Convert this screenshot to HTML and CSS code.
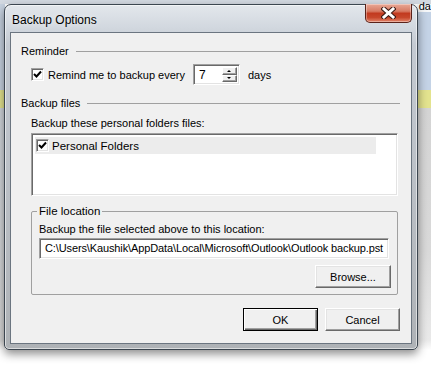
FILE: index.html
```html
<!DOCTYPE html>
<html lang="en">

<head>
    <meta charset="UTF-8">
    <meta name="viewport" content="width=device-width, initial-scale=1.0">
    <title>Backup Options</title>
    <link rel="stylesheet" href="styles.css">
</head>

<body>
    <div class="desktop">
        <!-- text of the app window behind the dialog -->
        <span class="behind-text">da</span>

        <div class="window">
            <div class="titlebar">
                <span class="title">Backup Options</span>
                <button class="close-btn" aria-label="Close">
                    <svg width="15" height="12" viewBox="0 0 15 12">
                        <path d="M3 2 L12 10 M12 2 L3 10" stroke="#3b1a14" stroke-width="5" stroke-linecap="square" />
                        <path d="M3 2 L12 10 M12 2 L3 10" stroke="#ffffff" stroke-width="3" stroke-linecap="square" />
                    </svg>
                </button>
            </div>

            <div class="client">
                <!-- Reminder -->
                <div class="heading">
                    <span>Reminder</span>
                    <span class="rule"></span>
                </div>
                <div class="remind-row">
                    <span class="check">
                        <svg width="9" height="9" viewBox="0 0 9 9">
                            <polyline points="1,4 3.5,6.5 8,1.5" fill="none" stroke="#000" stroke-width="2" />
                        </svg>
                    </span>
                    <span class="remind-label">Remind me to backup every</span>
                    <div class="spinner field">
                        <span class="spin-value">7</span>
                        <div class="spin-btns">
                            <span class="spin-btn"><i class="arrow-up"></i></span>
                            <span class="spin-btn"><i class="arrow-down"></i></span>
                        </div>
                    </div>
                    <span class="days">days</span>
                </div>

                <!-- Backup files -->
                <div class="heading second">
                    <span>Backup files</span>
                    <span class="rule"></span>
                </div>
                <div class="indent-label">Backup these personal folders files:</div>
                <div class="listbox field">
                    <div class="list-item">
                        <span class="check">
                            <svg width="9" height="9" viewBox="0 0 9 9">
                                <polyline points="1,4 3.5,6.5 8,1.5" fill="none" stroke="#000" stroke-width="2" />
                            </svg>
                        </span>
                        <span>Personal Folders</span>
                    </div>
                </div>

                <fieldset class="group">
                    <legend>File location</legend>
                    <div class="group-label">Backup the file selected above to this location:</div>
                    <div class="textbox field">C:\Users\Kaushik\AppData\Local\Microsoft\Outlook\Outlook backup.pst</div>
                    <div class="browse-row">
                        <button class="btn">Browse...</button>
                    </div>
                </fieldset>

                <div class="dialog-buttons">
                    <button class="btn default">OK</button>
                    <button class="btn">Cancel</button>
                </div>
            </div>
        </div>
    </div>
</body>

</html>
```

FILE: styles.css
```css
html,
body {
    margin: 0;
    height: 100%;
    overflow: hidden;
    font-family: "Liberation Sans", Arial, sans-serif;
    font-size: 11px;
    color: #000;
}

/* the screen behind the dialog */
.desktop {
    position: relative;
    width: 431px;
    height: 365px;
    background:
        linear-gradient(180deg, #d3d9e1 0, #d3d9e1 4px, transparent 4px),
        linear-gradient(180deg, #f5f7f9 0, #f5f7f9 12px, #c4d3e6 12px, #c4d3e6 90px, #e3e38e 90px, #e3e38e 108px, #d4d4d4 108px, #d9d9d9 250px, #e9e9e9 340px, #ffffff 350px) right top / 14px 100% no-repeat,
        linear-gradient(180deg, #c6d1df 0, #c6d1df 90px, #e3e38e 90px, #e3e38e 108px, #cfd4da 108px, #d6d6d6 340px, #ffffff 350px) left top / 5px 100% no-repeat,
        #ffffff;
}

.behind-text {
    position: absolute;
    right: 0;
    top: 0;
    font-size: 11px;
    line-height: 12px;
}

.window {
    position: absolute;
    left: 4px;
    top: 4px;
    width: 414px;
    height: 346px;
    box-sizing: border-box;
    border: 1px solid #3c4650;
    border-radius: 7px 7px 5px 5px;
    background: linear-gradient(180deg, #e3e7ec 0, #d2d8df 22px, #c4cad2 40px, #b9bec4 200px, #aeb2b6 100%);
    box-shadow: 0 4px 10px rgba(0, 0, 0, 0.45), inset 0 0 0 1px rgba(255, 255, 255, 0.55);
    display: flex;
    flex-direction: column;
}

.titlebar {
    height: 27px;
    display: flex;
    justify-content: space-between;
    align-items: flex-start;
    flex-shrink: 0;
}

.title {
    font-size: 12px;
    line-height: 14px;
    margin: 8px 0 0 7px;
    color: #000;
    text-shadow: 0 0 6px rgba(255, 255, 255, 0.9);
}

.close-btn {
    width: 47px;
    height: 19px;
    margin: -1px 5px 0 0;
    padding: 0;
    border: 1px solid #5a2219;
    border-top: none;
    border-radius: 0 0 5px 5px;
    background: linear-gradient(180deg, #e9a896 0, #d77b64 40%, #c23a1f 52%, #c7472b 75%, #e3876c 100%);
    box-shadow: inset 0 0 0 1px rgba(255, 255, 255, 0.35);
    display: flex;
    align-items: center;
    justify-content: center;
}

.client {
    flex: 1;
    margin: 0 5px 5px 5px;
    border: 1px solid #6b7580;
    background-color: #f0f0f0;
    padding: 11px 11px 0 10px;
}

.heading {
    display: flex;
    align-items: center;
    gap: 7px;
    height: 14px;
    line-height: 14px;
}

.heading.second {
    margin-top: 11px;
}

.rule {
    flex: 1;
    height: 1px;
    background-color: #a0a0a0;
}

/* sunken 3d look used by text fields */
.field {
    box-sizing: border-box;
    background-color: #fff;
    border: 1px solid;
    border-color: #a0a0a0 #ffffff #ffffff #a0a0a0;
    box-shadow: inset 1px 1px 0 #696969, inset -1px -1px 0 #e3e3e3;
}

.check {
    box-sizing: border-box;
    width: 13px;
    height: 13px;
    background-color: #fff;
    border: 1px solid;
    border-color: #a0a0a0 #ffffff #ffffff #a0a0a0;
    box-shadow: inset 1px 1px 0 #696969, inset -1px -1px 0 #e3e3e3;
    display: flex;
    align-items: center;
    justify-content: center;
    flex-shrink: 0;
}

.remind-row {
    display: flex;
    align-items: center;
    height: 21px;
    margin: 6px 0 0 10px;
}

.remind-label {
    margin-left: 4px;
}

.spinner {
    width: 47px;
    height: 21px;
    margin-left: 8px;
    display: flex;
    padding: 2px;
}

.spin-value {
    flex: 1;
    padding-left: 3px;
    line-height: 16px;
    font-size: 12px;
}

.spin-btns {
    width: 15px;
    display: flex;
    flex-direction: column;
}

.spin-btn {
    flex: 1;
    box-sizing: border-box;
    background-color: #f0f0f0;
    border: 1px solid;
    border-color: #ffffff #696969 #696969 #ffffff;
    box-shadow: inset -1px -1px 0 #a0a0a0;
    display: flex;
    align-items: center;
    justify-content: center;
}

.arrow-up {
    border-left: 2px solid transparent;
    border-right: 2px solid transparent;
    border-bottom: 2px solid #000;
}

.arrow-down {
    border-left: 2px solid transparent;
    border-right: 2px solid transparent;
    border-top: 2px solid #000;
}

.days {
    margin-left: 8px;
}

.indent-label {
    margin: 6px 0 0 10px;
    line-height: 14px;
}

.listbox {
    width: 367px;
    height: 63px;
    margin: 3px 0 0 10px;
    padding: 3px 21px 0 3px;
}

.list-item {
    height: 17px;
    background-color: #ececec;
    display: flex;
    align-items: center;
    gap: 3px;
    padding-left: 1px;
    font-size: 11.5px;
}

.group {
    width: 367px;
    box-sizing: border-box;
    margin: 8px 0 0 10px;
    padding: 0 6px 6px 7px;
    border: 1px solid #a0a0a0;
    border-radius: 2px;
    min-width: 0;
}

.group legend {
    padding: 0 2px;
    margin-left: -2px;
    line-height: 14px;
    font-size: 11.5px;
}

.group-label {
    margin-top: 4px;
    line-height: 14px;
}

.textbox {
    width: 350px;
    height: 21px;
    margin-top: 2px;
    padding-left: 5px;
    line-height: 19px;
    letter-spacing: -0.12px;
    white-space: nowrap;
    overflow: hidden;
}

.browse-row {
    display: flex;
    justify-content: flex-end;
    margin-top: 6px;
}

/* raised classic buttons */
.btn {
    width: 75px;
    height: 23px;
    padding: 0;
    font-family: inherit;
    font-size: 11px;
    color: #000;
    background-color: #f0f0f0;
    border: 1px solid;
    border-color: #ffffff #696969 #696969 #ffffff;
    box-shadow: inset -1px -1px 0 #a0a0a0, inset 1px 1px 0 #e3e3e3;
}

.browse-row .btn {
    width: 76px;
}

.btn.default {
    border: 1px solid #000;
    box-shadow: inset 1px 1px 0 #fff, inset -1px -1px 0 #696969, inset -2px -2px 0 #a0a0a0;
}

.dialog-buttons {
    display: flex;
    justify-content: flex-end;
    gap: 7px;
    margin-top: 13px;
}
```
